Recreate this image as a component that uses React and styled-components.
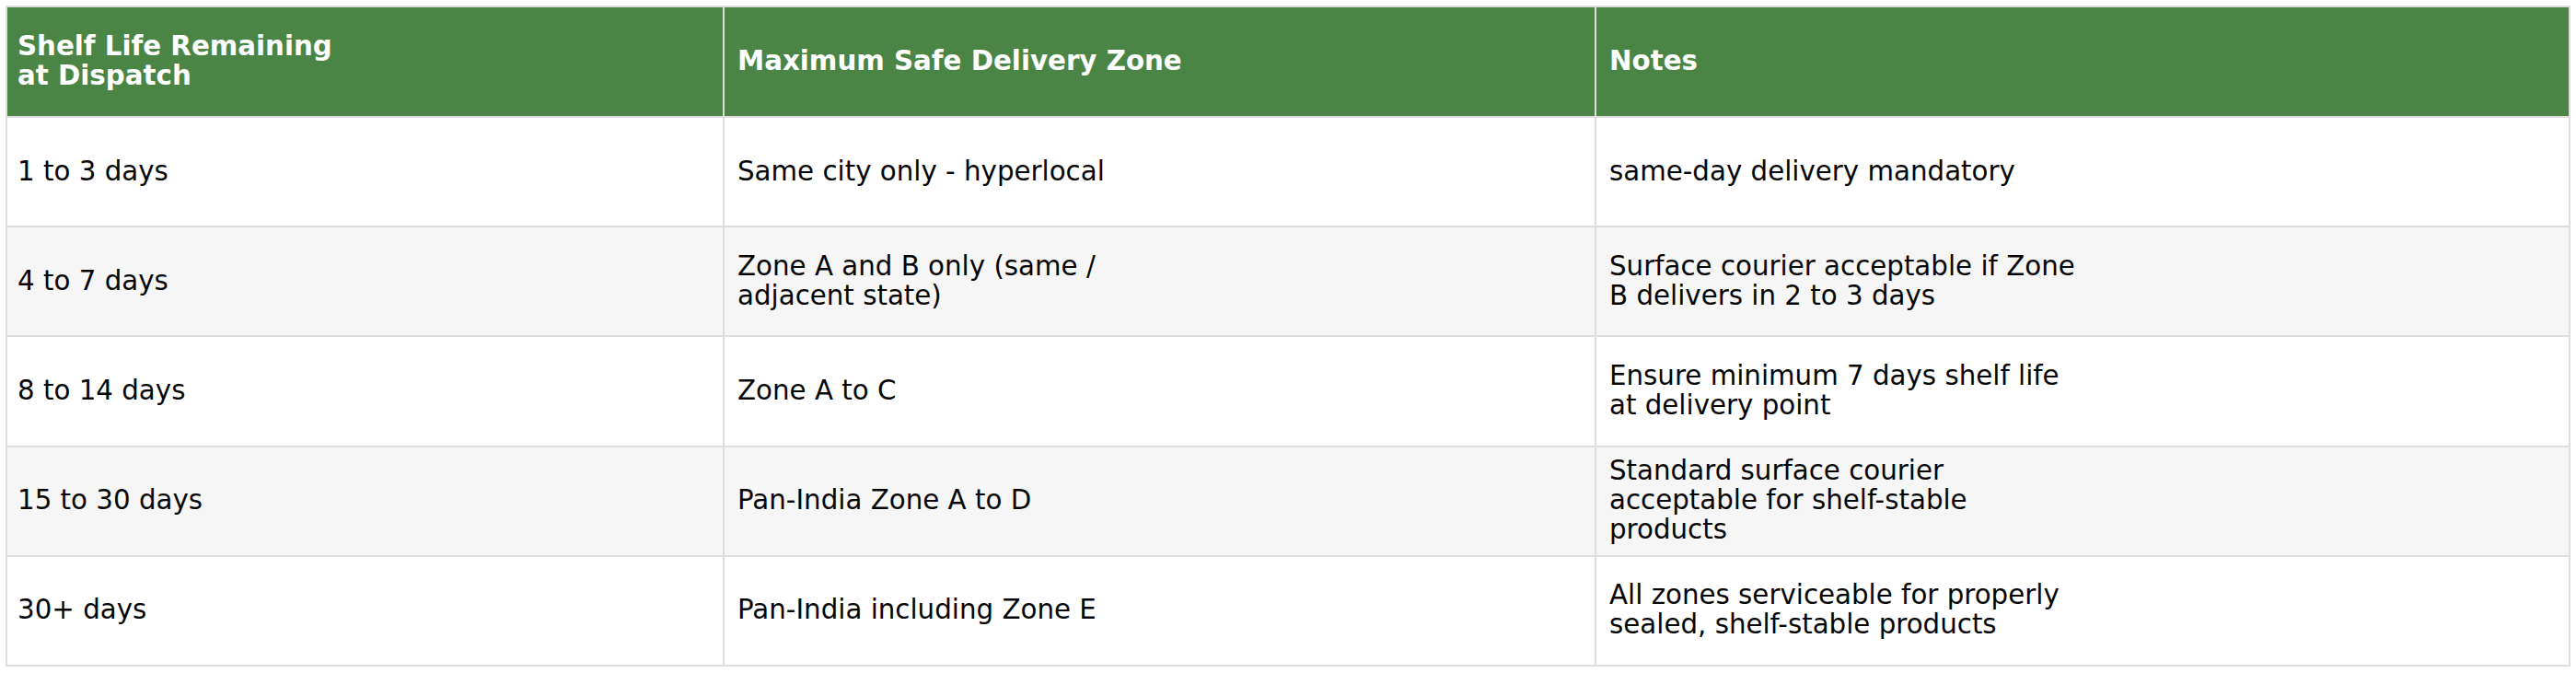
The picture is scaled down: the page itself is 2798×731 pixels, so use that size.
import React from 'react';
import styled, { createGlobalStyle } from 'styled-components';

const GlobalStyle = createGlobalStyle`
  body {
    margin: 6px;
    background: #ffffff;
    font-family: "DejaVu Sans", "Noto Sans", sans-serif;
  }
`;

const Table = styled.div`
  display: grid;
  grid-template-columns: 777px 945px 1fr;
  grid-template-rows: 118px repeat(5, 117.2px);
  gap: 2px;
  padding: 2px;
  background: #dddddd;
`;

const HeadCell = styled.div`
  display: flex;
  align-items: center;
  padding: 0 14px 0 ${(p) => p.$indent};
  background: #4a8546;
  color: #ffffff;
  font-size: 29.3px;
  font-weight: bold;
  line-height: 1.09;
`;

const Cell = styled.div`
  display: flex;
  align-items: center;
  padding: 0 14px 0 ${(p) => p.$indent};
  background: ${(p) => (p.$striped ? '#f6f6f6' : '#ffffff')};
  color: #050505;
  font-size: 29.3px;
  line-height: 1.09;
`;

const CellText = styled.span`
  max-width: ${(p) => p.$wrap};
`;

const columns = [
  { title: 'Shelf Life Remaining at Dispatch', wrap: '365px', indent: '11px' },
  { title: 'Maximum Safe Delivery Zone', wrap: '502px', indent: '14px' },
  { title: 'Notes', wrap: '518px', indent: '14px' },
];

const rows = [
  ['1 to 3 days', 'Same city only - hyperlocal', 'same-day delivery mandatory'],
  ['4 to 7 days', 'Zone A and B only (same / adjacent state)', 'Surface courier acceptable if Zone B delivers in 2 to 3 days'],
  ['8 to 14 days', 'Zone A to C', 'Ensure minimum 7 days shelf life at delivery point'],
  ['15 to 30 days', 'Pan-India Zone A to D', 'Standard surface courier acceptable for shelf-stable products'],
  ['30+ days', 'Pan-India including Zone E', 'All zones serviceable for properly sealed, shelf-stable products'],
];

const App = () => (
  <>
    <GlobalStyle />
    <Table>
      {columns.map((col) => (
        <HeadCell key={col.title} $indent={col.indent}>
          <CellText $wrap={col.wrap}>{col.title}</CellText>
        </HeadCell>
      ))}
      {rows.map((row, i) =>
        row.map((text, j) => (
          <Cell key={`${i}-${j}`} $striped={i % 2 === 1} $indent={columns[j].indent}>
            <CellText $wrap={columns[j].wrap}>{text}</CellText>
          </Cell>
        ))
      )}
    </Table>
  </>
);

export default App;
